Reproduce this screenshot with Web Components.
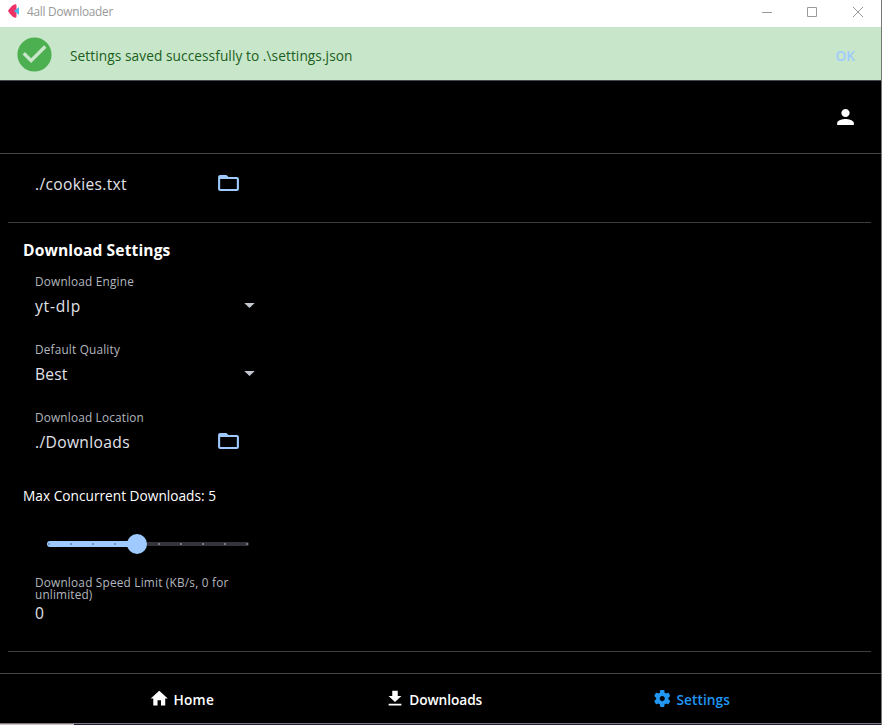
<!DOCTYPE html>
<html lang="en">
<head>
<meta charset="utf-8">
<title>4all Downloader</title>
<style>
html,body{margin:0;height:100%;background:#000;overflow:hidden}
body{font-family:"Open Sans","Noto Sans",sans-serif}
</style>
</head>
<body>
<app-window></app-window>
<script>
const ICONS = {
  folder: '<path d="M20 6h-8l-2-2H4c-1.1 0-2 .9-2 2v12c0 1.1.9 2 2 2h16c1.1 0 2-.9 2-2V8c0-1.1-.9-2-2-2zm0 12H4V8h16v10z"/>',
  arrow: '<path d="M7 10l5 5 5-5z"/>',
  person: '<path d="M12 12c2.21 0 4-1.79 4-4s-1.79-4-4-4-4 1.79-4 4 1.79 4 4 4zm0 2c-2.67 0-8 1.34-8 4v2h16v-2c0-2.66-5.33-4-8-4z"/>',
  home: '<path d="M10 20v-6h4v6h5v-8h3L12 3 2 12h3v8z"/>',
  download: '<path d="M19 9h-4V3H9v6H5l7 7 7-7zM5 18v2h14v-2H5z"/>',
  settings: '<path d="M19.14 12.94c.04-.3.06-.61.06-.94 0-.32-.02-.64-.07-.94l2.03-1.58c.18-.14.23-.41.12-.61l-1.92-3.32c-.12-.22-.37-.29-.59-.22l-2.39.96c-.5-.38-1.03-.7-1.62-.94l-.36-2.54c-.04-.24-.24-.41-.48-.41h-3.84c-.24 0-.43.17-.47.41l-.36 2.54c-.59.24-1.13.57-1.62.94l-2.39-.96c-.22-.08-.47 0-.59.22L2.74 8.87c-.12.21-.08.47.12.61l2.03 1.58c-.05.3-.09.63-.09.94s.02.64.07.94l-2.03 1.58c-.18.14-.23.41-.12.61l1.92 3.32c.12.22.37.29.59.22l2.39-.96c.5.38 1.03.7 1.62.94l.36 2.54c.05.24.24.41.48.41h3.84c.24 0 .44-.17.47-.41l.36-2.54c.59-.24 1.13-.56 1.62-.94l2.39.96c.22.08.47 0 .59-.22l1.92-3.32c.12-.22.07-.47-.12-.61l-2.01-1.58zM12 15c-1.65 0-3-1.35-3-3s1.35-3 3-3 3 1.35 3 3-1.35 3-3 3z"/>',
  check: '<path d="M12 2C6.48 2 2 6.48 2 12s4.48 10 10 10 10-4.48 10-10S17.52 2 12 2zm-2 15l-5-5 1.41-1.41L10 14.17l7.59-7.59L19 8l-9 9z"/>',
  logo: '<path fill="#ee3167" d="M0 12C4 7 10 1 16 0.500q2.500 0 2.500 2V21.500q0 2-2.500 2C10 23 4 17 0 12z"/><path fill="#4db8e8" d="M13 12L24 5v14z"/>',
  min: '<path d="M7 12.500h10" fill="none" stroke="currentColor"/>',
  max: '<path d="M7.500 7.500h9v9h-9z" fill="none" stroke="currentColor"/>',
  close: '<path d="M7 7l10 10M17 7L7 17" fill="none" stroke="currentColor"/>'
};

class UiElement extends HTMLElement {
  render(html) {
    if (!this.shadowRoot) this.attachShadow({mode:'open'});
    this.shadowRoot.innerHTML = html;
  }
}

/* One line of text; "w" is the advance width that the line is tracked to. */
class UiText extends UiElement {
  connectedCallback() {
    this.render(`<style>
      :host{display:block;height:20px;line-height:20px;white-space:nowrap;flex:none;
        font-size:${this.getAttribute('size')}px}
      span{display:inline-block;vertical-align:top}
    </style><span><slot></slot></span>`);
    const w = parseFloat(this.getAttribute('w'));
    const span = this.shadowRoot.querySelector('span');
    const n = (this.textContent || this.getRootNode().host.textContent).length;
    if (w && n) span.style.letterSpacing = ((w - span.getBoundingClientRect().width) / n).toFixed(3) + 'px';
  }
}
customElements.define('ui-text', UiText);

class UiIcon extends UiElement {
  connectedCallback() {
    const w = this.getAttribute('w') || 24, h = this.getAttribute('h') || w;
    this.render(`<style>:host{display:block;flex:none;width:${w}px;height:${h}px}svg{display:block}</style>
      <svg width="${w}" height="${h}" viewBox="0 0 24 24" preserveAspectRatio="none" fill="currentColor">${ICONS[this.getAttribute('name')]}</svg>`);
  }
}
customElements.define('ui-icon', UiIcon);

class TitleBar extends UiElement {
  connectedCallback() {
    this.render(`<style>
      :host{display:flex;height:27px;background:#fff;color:#999;box-sizing:border-box;padding-left:8px;flex:none}
      .logo{margin-top:4px}.t{margin:1px 0 0 8px}
      .c{display:flex;margin-left:auto;gap:21px;padding-right:11px}
      .c :nth-child(2){margin-right:1px}
    </style>
    <ui-icon class="logo" name="logo" w="11" h="14"></ui-icon>
    <ui-text class="t" size="11.800" w="86"><slot></slot></ui-text>
    <div class="c"><ui-icon name="min"></ui-icon><ui-icon name="max"></ui-icon><ui-icon name="close"></ui-icon></div>`);
  }
}
customElements.define('title-bar', TitleBar);

class NoticeBanner extends UiElement {
  connectedCallback() {
    this.render(`<style>
      :host{display:flex;flex:none;height:54px;box-sizing:border-box;background:#c8e6c9;border-bottom:1px solid #43474e;color:#1b5e20;padding:0 26px 0 13.500px}
      ui-icon{color:#4caf50;margin-top:7px}
      .m{margin:19px 0 0 15.500px}
      .ok{margin:19px 0 0 auto;color:#9ecaff;font-weight:600}
    </style>
    <ui-icon name="check" w="41"></ui-icon>
    <ui-text class="m" size="13.700" w="282.500"><slot></slot></ui-text>
    <ui-text class="ok" size="13.700" w="19.500">OK</ui-text>`);
  }
}
customElements.define('notice-banner', NoticeBanner);

class UserBar extends UiElement {
  connectedCallback() {
    this.render(`<style>
      :host{display:flex;flex:none;justify-content:flex-end;height:73px;box-sizing:border-box;border-bottom:1px solid #444;color:#fff;padding:24px 23px 0 0}
    </style><ui-icon name="person" w="25" h="24"></ui-icon>`);
  }
}
customElements.define('user-bar', UserBar);

class FieldRow extends UiElement {
  connectedCallback() {
    const a = k => this.getAttribute(k);
    const second = a('label2') ? `<ui-text class="l" size="11.800" w="${a('l2w')}">${a('label2')}</ui-text>` : '';
    const icon = a('icon');
    this.render(`<style>
      :host{display:block;height:68px;padding-left:35px;box-sizing:border-box;color:#e2e2e9}
      .l{color:#b4b7bf}
      ${second ? '.l{height:12px;line-height:12px}:host{padding-top:4px}' : ''}
      .v{display:flex;height:20px;width:222px;margin-top:${second ? 3 : 5}px}
      .v ui-icon{margin-left:auto}
      .folder{color:#9ecaff;margin-top:-3px;margin-right:16.500px}
      .arrow{color:#c3c7cf;margin-top:-3px;margin-right:-5px}
    </style>
    <ui-text class="l" size="11.800" w="${a('lw') || ''}">${a('label') || ''}</ui-text>${second}
    <div class="v"><ui-text size="15.600" w="${a('w')}"><slot></slot></ui-text>${icon ? `<ui-icon class="${icon}" name="${icon}" w="25" h="24"></ui-icon>` : ''}</div>`);
  }
}
customElements.define('field-row', FieldRow);

class UiSlider extends UiElement {
  connectedCallback() {
    const ticks = Array.from({length:10}, (_, i) => `<rect x="${i*22+1}" y="9" width="2" height="2" fill="${i<4?'#6f96c4':'#74777f'}"/>`).join('');
    this.render(`<style>:host{display:block;width:202px;height:20px}svg{display:block}</style>
    <svg width="202" height="20"><rect x="80" y="8" width="122" height="4" rx="2" fill="#33353a"/>
    <rect y="7" width="92" height="6" rx="3" fill="#9ecaff"/>${ticks}<circle cx="90" cy="10" r="10" fill="#9ecaff"/></svg>`);
  }
}
customElements.define('ui-slider', UiSlider);

class SettingsPanel extends UiElement {
  connectedCallback() {
    this.render(`<style>
      :host{display:block;height:519px;flex:none;overflow:hidden;color:#fff}
      .first{margin-top:-5px}
      hr{border:0;margin:0 10px 0 8px;height:1px;background:#3b3d42}
      h2{margin:17px 0 0 23px;font-size:inherit;font-weight:700}
      .a{margin-top:11px}
      .max{margin:11px 0 0 23px}
      ui-slider{margin:28px 0 0 47px}
      .speed{margin-top:18px;height:79px}
    </style>
    <field-row class="first" icon="folder" w="92">./cookies.txt</field-row>
    <hr style="margin-top:5px">
    <h2><ui-text size="15.600" w="147.500">Download Settings</ui-text></h2>
    <field-row class="a" label="Download Engine" lw="99" icon="arrow" w="46">yt-dlp</field-row>
    <field-row label="Default Quality" lw="85" icon="arrow" w="32.500">Best</field-row>
    <field-row label="Download Location" lw="109" icon="folder" w="95">./Downloads</field-row>
    <ui-text class="max" size="13.700" w="193">Max Concurrent Downloads: 5</ui-text>
    <ui-slider></ui-slider>
    <field-row class="speed" label="Download Speed Limit (KB/s, 0 for" lw="193.500" label2="unlimited)" l2w="57.500" w="9.500">0</field-row>
    <hr>`);
  }
}
customElements.define('settings-panel', SettingsPanel);

class NavItem extends UiElement {
  connectedCallback() {
    const a = k => this.getAttribute(k);
    this.render(`<style>
      :host{display:flex;color:#fff;font-weight:600;padding-top:14px;gap:${a('gap')}px}
      :host([active]){color:#2196f3}
      ui-text{margin-top:2px}
    </style><ui-icon name="${a('icon')}" w="${a('iw')}" h="21"></ui-icon><ui-text size="13.700" w="${a('w')}"><slot></slot></ui-text>`);
  }
}
customElements.define('nav-item', NavItem);

class BottomNav extends UiElement {
  connectedCallback() {
    this.render(`<style>
      :host{display:flex;justify-content:space-between;flex:none;height:51px;box-sizing:border-box;border-top:1px solid #444;border-bottom:1px solid #83777f;padding:0 151px 0 149px}
    </style>
    <nav-item icon="home" iw="20.500" gap="4" w="40.500">Home</nav-item>
    <nav-item icon="download" iw="22" gap="3.500" w="73">Downloads</nav-item>
    <nav-item icon="settings" iw="20.500" gap="4" w="53.500" active>Settings</nav-item>`);
  }
}
customElements.define('bottom-nav', BottomNav);

class AppWindow extends UiElement {
  connectedCallback() {
    this.render(`<style>
      :host{display:flex;flex-direction:column;width:882px;height:725px;box-sizing:border-box;background:#000;border-right:1px solid #777}
      footer{height:1px;background:linear-gradient(90deg,#c8c5c8 74px,#1c1c34 74px)}
    </style>
    <title-bar>4all Downloader</title-bar>
    <notice-banner>Settings saved successfully to .\\settings.json</notice-banner>
    <user-bar></user-bar>
    <settings-panel></settings-panel>
    <bottom-nav></bottom-nav>
    <footer></footer>`);
  }
}
customElements.define('app-window', AppWindow);
</script>
</body>
</html>
